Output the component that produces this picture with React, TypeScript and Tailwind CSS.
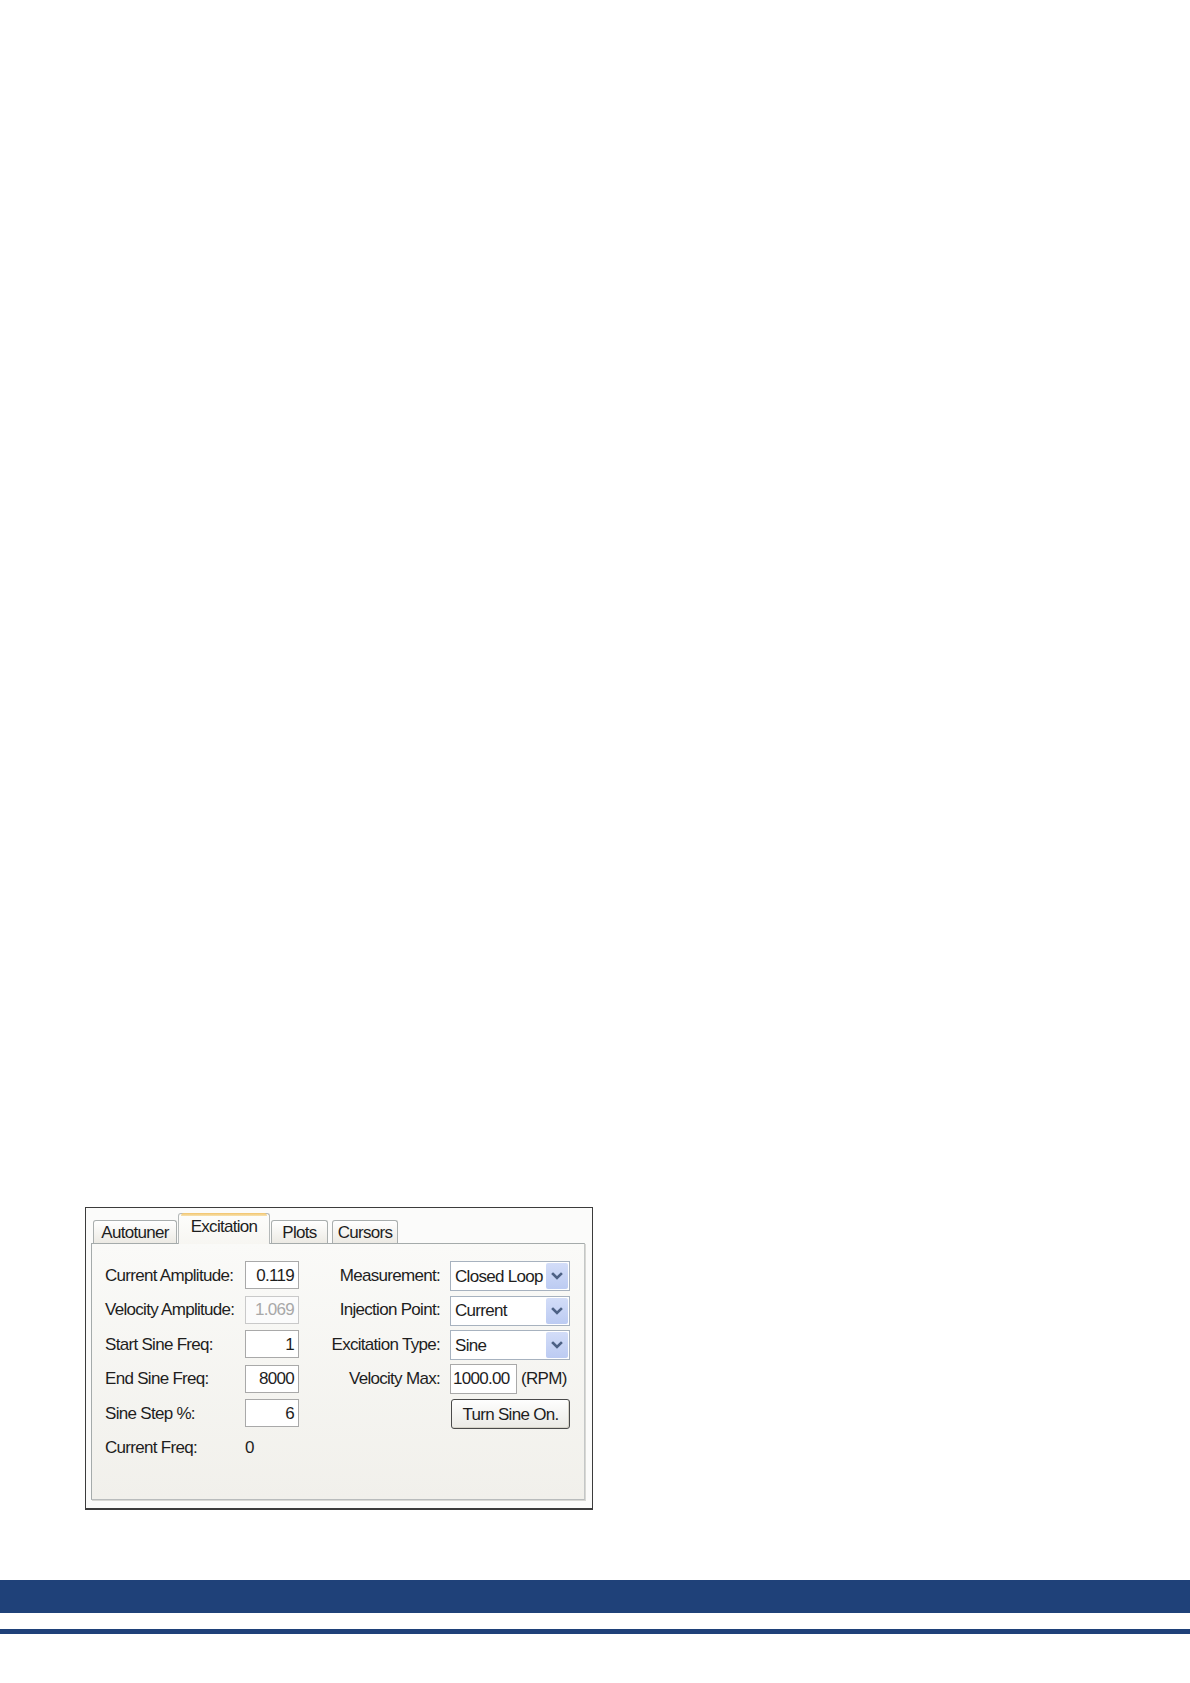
import React from "react";

const Chevron = () => (
  <svg width="12" height="10" viewBox="0 0 12 10">
    <polyline points="2,3 6,7 10,3" fill="none" stroke="#4d6185" strokeWidth="2.6" strokeLinecap="square" />
  </svg>
);

const Combo = ({ value }: { value: string }) => (
  <div className="w-[120px] h-[30px] border border-[#a7b2bf] bg-white flex items-stretch overflow-hidden">
    <div className="flex-1 overflow-hidden whitespace-nowrap pl-[4px] flex items-center leading-none">{value}</div>
    <div className="w-[22px] m-px rounded-[2px] bg-gradient-to-b from-[#d3ddf8] to-[#bccbf2] flex items-center justify-center">
      <Chevron />
    </div>
  </div>
);

const Field = ({ value, disabled }: { value: string; disabled?: boolean }) => (
  <div
    className={
      "w-[54px] h-[28px] border flex items-center justify-end pr-[4px] leading-none " +
      (disabled ? "border-[#c9c9c9] bg-[#fbfbfb] text-[#a8a8a8]" : "border-[#a9a9a9] bg-white text-[#1e1e1e]")
    }
  >
    {value}
  </div>
);

const Tab = ({ label, w, selected }: { label: string; w: number; selected?: boolean }) =>
  selected ? (
    <div
      style={{ width: w }}
      className="relative h-[31px] -mb-px mx-[1px] rounded-t-[3px] border border-b-0 border-[#b5b9b9] bg-gradient-to-b from-[#fdfdfb] to-[#f7f6f2] flex items-start justify-center pt-[1px] z-10"
    >
      <div className="absolute -top-px left-[2px] right-[2px] h-[3px] rounded-t-[3px] bg-gradient-to-b from-[#f2c46a] to-[#f7e2b0]" />
      <span className="leading-[24px]">{label}</span>
    </div>
  ) : (
    <div
      style={{ width: w }}
      className="h-[23px] rounded-t-[3px] border border-b-0 border-[#a9aeae] bg-gradient-to-b from-[#ffffff] to-[#eceae4] flex items-center justify-center"
    >
      <span className="leading-none">{label}</span>
    </div>
  );

const Label = ({ children, right }: { children: React.ReactNode; right?: boolean }) => (
  <div className={"flex items-center whitespace-nowrap leading-none " + (right ? "justify-end pr-[10px]" : "")}>{children}</div>
);

export default function App() {
  return (
    <div
      className="w-[1190px] h-[1683px] bg-white flex flex-col text-[17px] tracking-[-0.7px] text-[#1e1e1e]"
      style={{ fontFamily: '"Liberation Sans", Arial, sans-serif' }}
    >
      <div className="pt-[1207px]">
        <div className="ml-[85px] w-[508px] h-[303px] border border-[#3c3c3c] border-b-2 bg-[#fbfbfa] pl-[5px] pr-[7px] pt-[5px] pb-[8px] flex flex-col">
          <div className="h-[30px] flex items-end pl-[2px] gap-0">
            <Tab label="Autotuner" w={84} />
            <Tab label="Excitation" w={92} selected />
            <Tab label="Plots" w={57} />
            <div className="w-[4px]" />
            <Tab label="Cursors" w={66} />
          </div>
          <div className="flex-1 border border-[#a5abab] border-r-[#c4c7c7] border-b-[#b9bcbc] bg-gradient-to-b from-[#fafaf8] to-[#f1f0eb] shadow-[1px_1px_0_#d8d8d4] pl-[13px] pt-[17px]">
            <div className="grid grid-cols-[140px_54px_151px_120px] auto-rows-[28px] gap-y-[6.5px]">
              <Label>Current Amplitude:</Label>
              <Field value="0.119" />
              <Label right>Measurement:</Label>
              <Combo value="Closed Loop" />

              <Label>Velocity Amplitude:</Label>
              <Field value="1.069" disabled />
              <Label right>Injection Point:</Label>
              <Combo value="Current" />

              <Label>Start Sine Freq:</Label>
              <Field value="1" />
              <Label right>Excitation Type:</Label>
              <Combo value="Sine" />

              <Label>End Sine Freq:</Label>
              <Field value="8000" />
              <Label right>Velocity Max:</Label>
              <div className="flex items-center gap-[4px]">
                <div className="w-[67px] h-[30px] border border-[#a9a9a9] bg-white flex items-center pl-[2px] leading-none whitespace-nowrap overflow-hidden">
                  1000.00
                </div>
                <span className="leading-none whitespace-nowrap">(RPM)</span>
              </div>

              <Label>Sine Step %:</Label>
              <Field value="6" />
              <div />
              <div className="pl-[1px]">
                <button className="w-[119px] h-[30px] rounded-[3px] border border-[#4a4a4a] bg-gradient-to-b from-[#fefefe] to-[#ebeae5] shadow-[inset_-1px_-1px_0_#d6d3c8] flex items-center justify-center leading-none tracking-[-0.7px]">
                  Turn Sine On.
                </button>
              </div>

              <Label>Current Freq:</Label>
              <div className="flex items-center leading-none">0</div>
              <div />
              <div />
            </div>
          </div>
        </div>
      </div>
      <div className="mt-[70px] h-[33px] bg-[#1f4179]" />
      <div className="mt-[16px] h-[5px] bg-[#1f4179]" />
    </div>
  );
}
